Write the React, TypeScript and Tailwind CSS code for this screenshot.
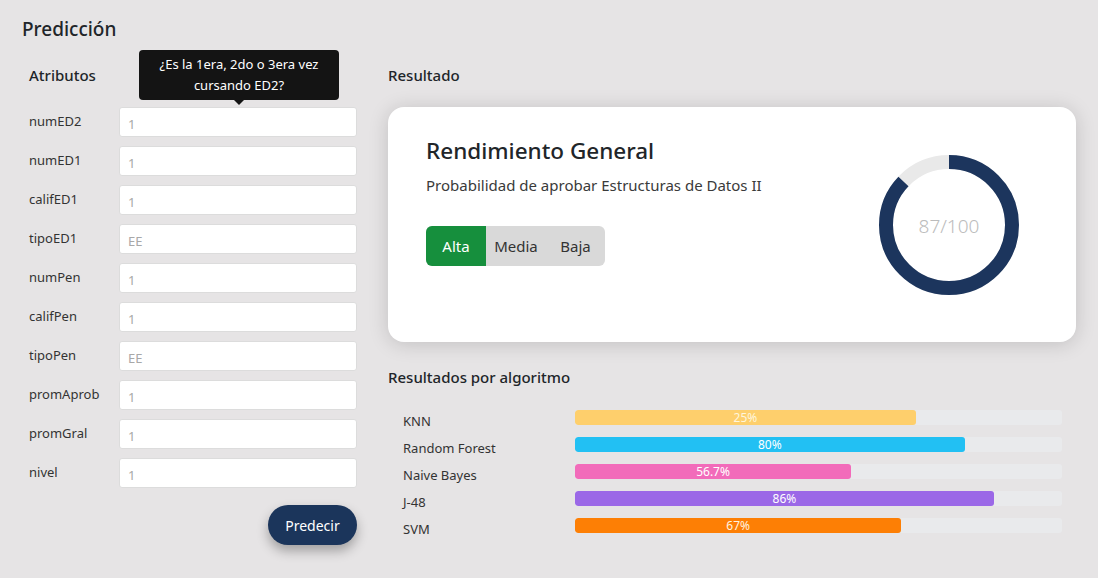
import React from 'react';

const atributos = [
  { name: 'numED2', value: '1' },
  { name: 'numED1', value: '1' },
  { name: 'califED1', value: '1' },
  { name: 'tipoED1', value: 'EE' },
  { name: 'numPen', value: '1' },
  { name: 'califPen', value: '1' },
  { name: 'tipoPen', value: 'EE' },
  { name: 'promAprob', value: '1' },
  { name: 'promGral', value: '1' },
  { name: 'nivel', value: '1' },
];

const algoritmos = [
  { name: 'KNN', label: '25%', width: 70, color: 'bg-[#fecf6c]', text: 'text-[#fff6dc]' },
  { name: 'Random Forest', label: '80%', width: 80, color: 'bg-[#22c0f3]', text: 'text-white' },
  { name: 'Naive Bayes', label: '56.7%', width: 56.7, color: 'bg-[#f26bba]', text: 'text-white' },
  { name: 'J-48', label: '86%', width: 86, color: 'bg-[#9b68e7]', text: 'text-white' },
  { name: 'SVM', label: '67%', width: 67, color: 'bg-[#fd7f05]', text: 'text-[#fff3e0]' },
];

const Donut = ({ value }: { value: number }) => {
  const r = 63;
  const c = 2 * Math.PI * r;
  return (
    <div className="relative w-[140px] h-[140px]">
      <svg width="140" height="140" viewBox="0 0 140 140" className="-rotate-90">
        <circle cx="70" cy="70" r={r} fill="none" stroke="#e9e9e9" strokeWidth="14" />
        <circle
          cx="70"
          cy="70"
          r={r}
          fill="none"
          stroke="#1c355d"
          strokeWidth="14"
          strokeDasharray={`${(c * value) / 100} ${c}`}
        />
      </svg>
      <div className="absolute inset-0 flex items-center justify-center pt-[3px] text-[19px] font-light text-[#bcbcbc]">
        {value}/100
      </div>
    </div>
  );
};

export default function App() {
  return (
    <div
      className="w-full h-[578px] bg-[#e6e4e5] pl-[22px] pt-[15px] text-[#212529] overflow-hidden"
      style={{ fontFamily: '"Noto Sans", "Open Sans", sans-serif' }}
    >
      <h1 className="text-[19px] leading-[28px] font-medium">Predicción</h1>

      <div className="flex mt-[21px]">
        {/* Atributos */}
        <div className="w-[328px] ml-[7px] flex flex-col">
          <h2 className="text-[15px] leading-[22px] font-medium">Atributos</h2>
          <div className="mt-[21px] flex flex-col gap-[9px]">
            {atributos.map((a, i) => (
              <div key={a.name} className="flex items-start">
                <label className="w-[90px] text-[13px] leading-[20px] pt-[4px] text-[#333]">{a.name}</label>
                <div className="relative">
                  {i === 0 && (
                    <div className="absolute left-[20px] bottom-[37px] w-[200px] h-[50px] bg-[#141414] rounded-[4px] flex items-center justify-center text-center text-white text-[13px] leading-[21px] px-3">
                      ¿Es la 1era, 2do o 3era vez cursando ED2?
                      <div className="absolute left-1/2 -translate-x-1/2 -bottom-[5px] w-0 h-0 border-l-[6px] border-r-[6px] border-t-[6px] border-l-transparent border-r-transparent border-t-[#141414]" />
                    </div>
                  )}
                  <input
                    placeholder={a.value}
                    className="w-[238px] h-[30px] bg-white border border-[#dcdcdc] rounded-[3px] px-[8px] pt-[3px] text-[13px] placeholder:text-[#a8a8a8] outline-none"
                  />
                </div>
              </div>
            ))}
          </div>
          <div className="flex justify-end mt-[17px]">
            <button className="w-[89px] h-[40px] rounded-full bg-[#1b355b] text-white text-[14px] shadow-[0_6px_12px_rgba(0,0,0,0.3)]">
              Predecir
            </button>
          </div>
        </div>

        {/* Resultado */}
        <div className="ml-[31px] w-[688px] flex flex-col">
          <h2 className="text-[15px] leading-[22px] font-medium">Resultado</h2>
          <div className="mt-[21px] h-[235px] bg-white rounded-[16px] shadow-[0_2px_20px_rgba(0,0,0,0.16)] flex items-center justify-between pl-[38px] pr-[57px]">
            <div className="flex flex-col self-start pt-[28px]">
              <h3 className="text-[22.5px] leading-[32px] font-medium text-[#212529]">Rendimiento General</h3>
              <p className="mt-[7px] text-[15px] leading-[22px] text-[#3a3a3a]">
                Probabilidad de aprobar Estructuras de Datos II
              </p>
              <div className="mt-[30px] flex w-[179px] h-[40px] rounded-[6px] bg-[#d9d9d9] overflow-hidden text-[15px]">
                <button className="w-[60px] bg-[#168f3d] text-white">Alta</button>
                <button className="w-[60px] text-[#333]">Media</button>
                <button className="w-[59px] text-[#333]">Baja</button>
              </div>
            </div>
            <Donut value={87} />
          </div>

          <h2 className="mt-[24px] text-[15px] leading-[22px] font-medium">Resultados por algoritmo</h2>
          <div className="mt-[22px] flex flex-col gap-[12px] pl-[15px] pr-[14px]">
            {algoritmos.map(a => (
              <div key={a.name} className="flex items-start h-[15px]">
                <span className="w-[172px] text-[13px] leading-[20px] text-[#333] pt-[1px]">{a.name}</span>
                <div className="flex-1 h-[15px] bg-[#e9eaec] rounded-[3px] overflow-hidden">
                  <div
                    className={`h-full ${a.color} rounded-[3px] flex items-center justify-center text-[12px] leading-none ${a.text}`}
                    style={{ width: `${a.width}%` }}
                  >
                    {a.label}
                  </div>
                </div>
              </div>
            ))}
          </div>
        </div>
      </div>
    </div>
  );
}
